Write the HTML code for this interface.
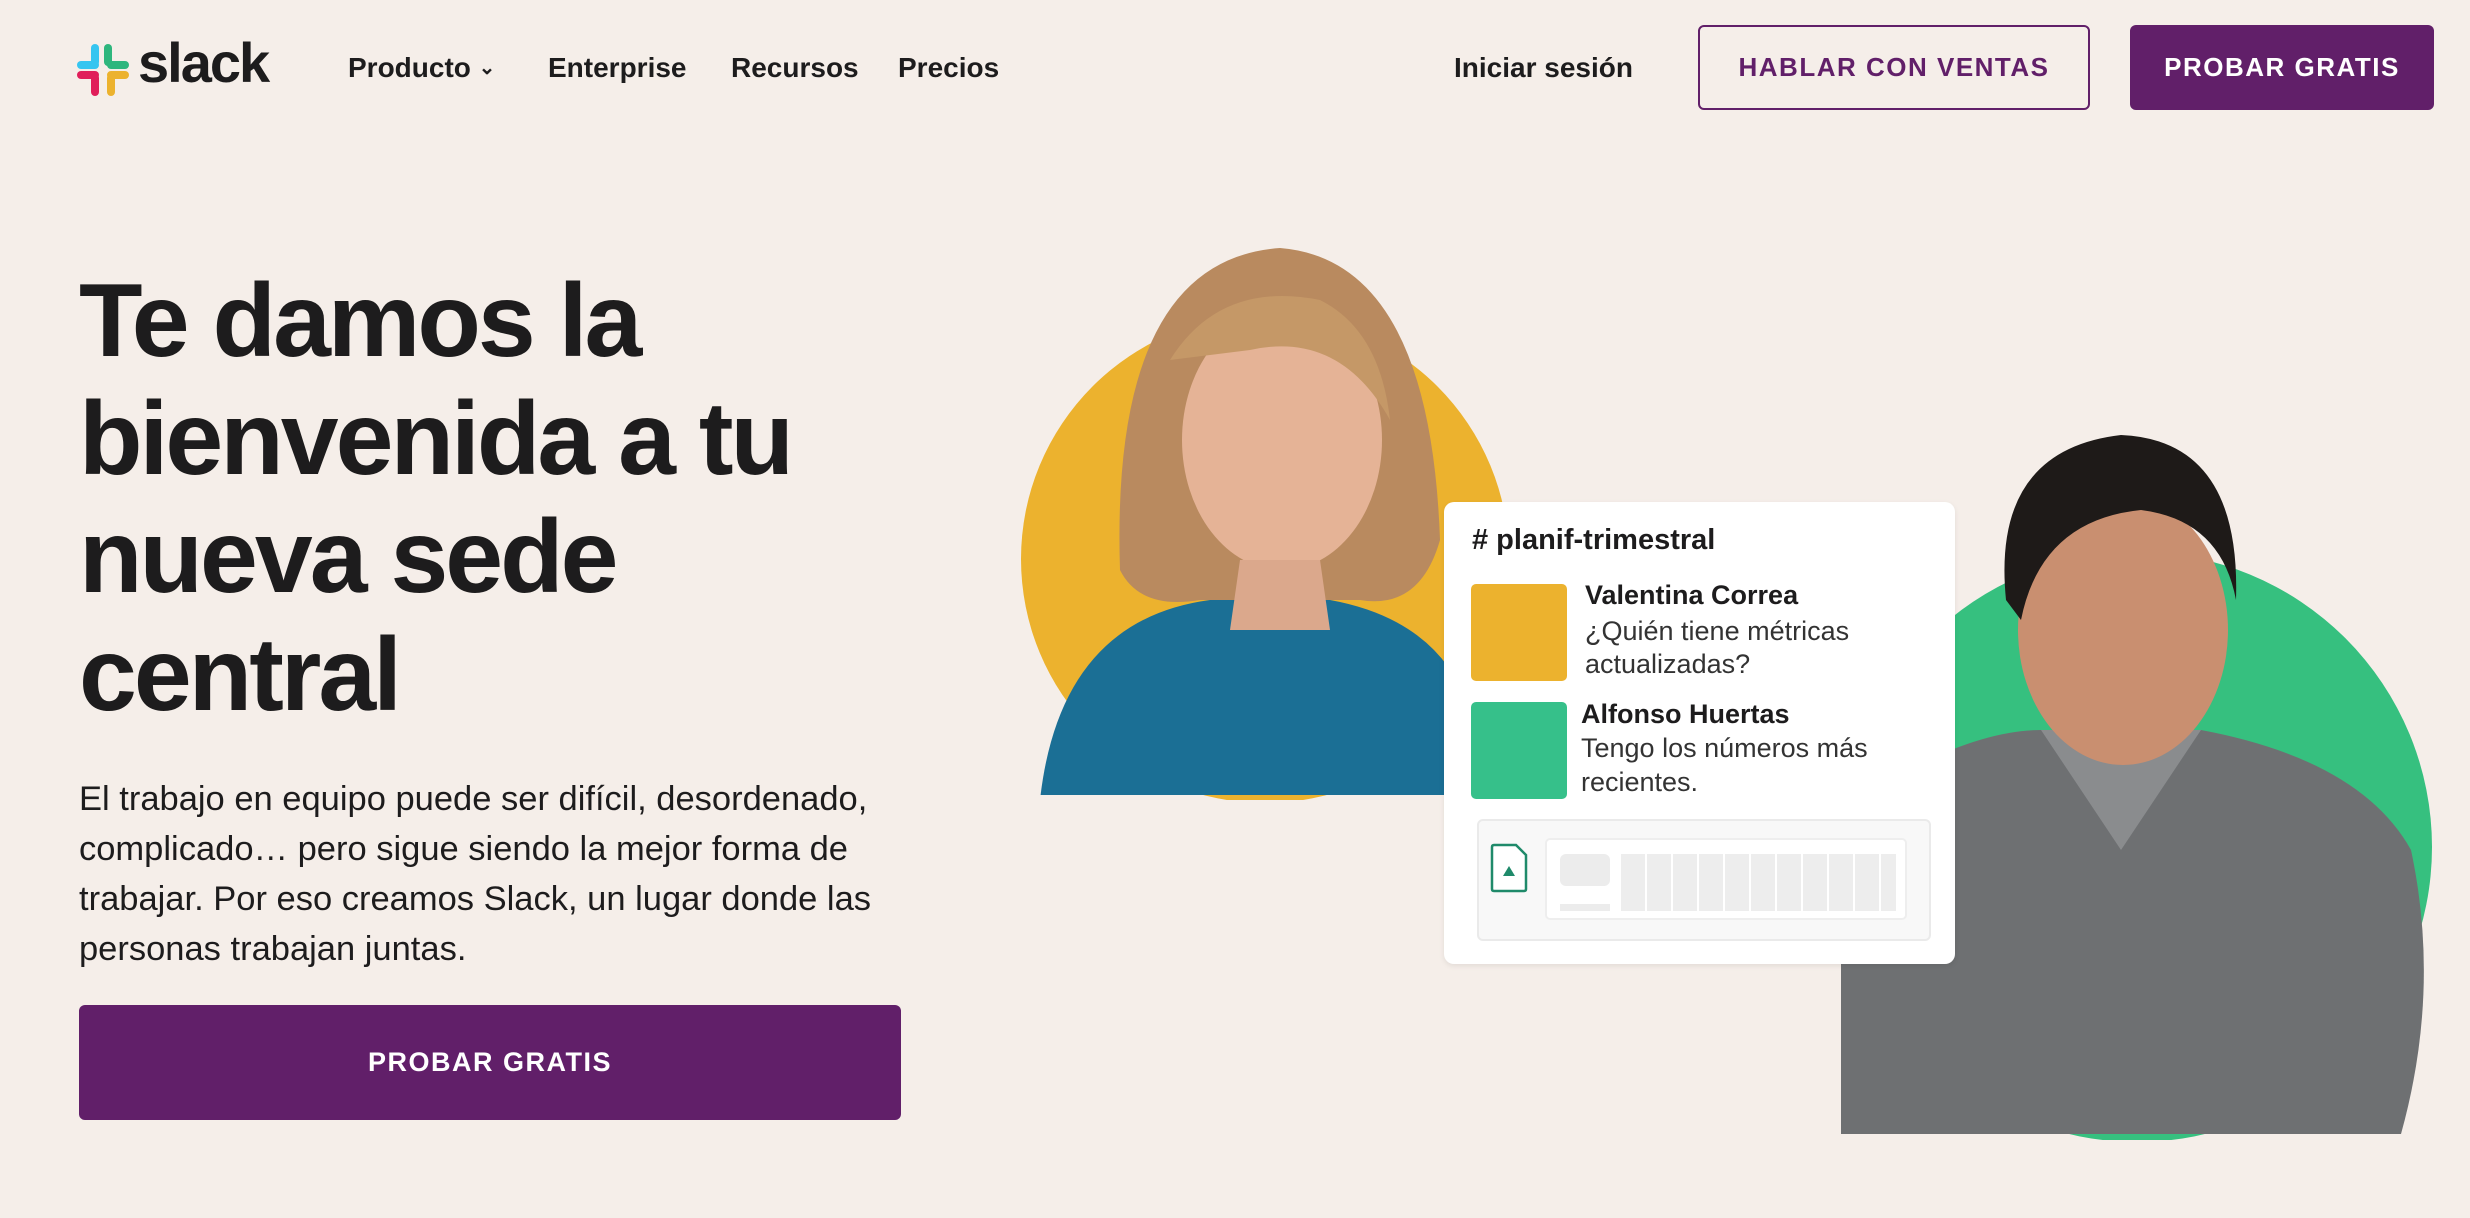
<!DOCTYPE html>
<html><head><meta charset="utf-8"><style>
*{margin:0;padding:0;box-sizing:border-box}
body{width:2470px;height:1218px;background:#f5eee9;font-family:"Liberation Sans",sans-serif;color:#1d1c1d;position:relative;overflow:hidden}
.a{position:absolute}
.nav{font-size:28px;font-weight:bold;top:52px;white-space:nowrap}
.btn{position:absolute;border-radius:6px;font-weight:bold;font-size:26px;letter-spacing:1.5px;display:flex;align-items:center;justify-content:center}
h1{position:absolute;left:79px;top:262px;font-size:104px;line-height:118px;letter-spacing:-3px;font-weight:bold;color:#1d1c1d}
p.lead{position:absolute;left:79px;top:774px;font-size:34.5px;line-height:50px;width:830px;color:#1d1c1d}
.card{position:absolute;left:1444px;top:502px;width:511px;height:462px;background:#fff;border-radius:10px;box-shadow:0 2px 6px rgba(0,0,0,.08)}
.card .t{position:absolute;font-family:"Liberation Sans",sans-serif}
</style></head><body>
<svg class="a" style="left:77px;top:44px" width="52" height="52" viewBox="0 0 52 52">
<rect x="0" y="17" width="22" height="8" rx="4" fill="#36c5f0"/><rect x="14" y="0" width="8" height="22" rx="4" fill="#36c5f0"/>
<rect x="27" y="0" width="8" height="22" rx="4" fill="#2eb67d"/><rect x="30" y="17" width="22" height="8" rx="4" fill="#2eb67d"/>
<rect x="30" y="27" width="22" height="8" rx="4" fill="#ecb22e"/><rect x="30" y="30" width="8" height="22" rx="4" fill="#ecb22e"/>
<rect x="14" y="30" width="8" height="22" rx="4" fill="#e01e5a"/><rect x="0" y="27" width="22" height="8" rx="4" fill="#e01e5a"/>
</svg>
<div class="a" style="left:138px;top:30px;font-size:56px;font-weight:bold;letter-spacing:-2px">slack</div>
<div class="a nav" style="left:348px">Producto <span style="font-size:20px;position:relative;top:-3px">&#8964;</span></div>
<div class="a nav" style="left:548px">Enterprise</div>
<div class="a nav" style="left:731px">Recursos</div>
<div class="a nav" style="left:898px">Precios</div>
<div class="a nav" style="left:1454px">Iniciar sesión</div>
<div class="btn" style="left:1698px;top:25px;width:392px;height:85px;border:2px solid #611f69;color:#611f69">HABLAR CON VENTAS</div>
<div class="btn" style="left:2130px;top:25px;width:304px;height:85px;background:#611f69;color:#fff">PROBAR GRATIS</div>

<h1>Te damos la<br>bienvenida a tu<br>nueva sede<br>central</h1>
<p class="lead">El trabajo en equipo puede ser difícil, desordenado, complicado… pero sigue siendo la mejor forma de trabajar. Por eso creamos Slack, un lugar donde las personas trabajan juntas.</p>
<div class="btn" style="left:79px;top:1005px;width:822px;height:115px;background:#611f69;color:#fff;font-size:27px">PROBAR GRATIS</div>

<svg class="a" style="left:1000px;top:240px" width="560" height="560" viewBox="0 0 560 560">
<defs><clipPath id="cw"><path d="M0 0H560V555H0Z"/></clipPath></defs>
<circle cx="265" cy="319" r="244" fill="#ecb22e"/>
<g clip-path="url(#cw)">
<path d="M40 560 Q60 380 210 360 L330 360 Q440 380 470 470 L470 560Z" fill="#1b6f95"/>
<path d="M120 330 Q110 20 280 8 Q430 20 440 300 Q420 370 360 360 L200 360 Q140 370 120 330Z" fill="#b98a5f"/>
<ellipse cx="282" cy="200" rx="100" ry="130" fill="#e5b396"/>
<path d="M240 320 L320 320 L330 390 L230 390Z" fill="#dba88c"/>
<path d="M170 120 Q220 40 320 60 Q380 90 390 180 Q340 90 250 110Z" fill="#c59867"/>
</g>
</svg>
<svg class="a" style="left:1841px;top:430px" width="600" height="710" viewBox="0 0 600 710">
<defs><clipPath id="cm"><path d="M0 0H600V704H0Z"/></clipPath></defs>
<circle cx="296" cy="417" r="295" fill="#36c07f"/>
<g clip-path="url(#cm)">
<path d="M0 704 L0 380 Q120 300 200 300 L360 300 Q520 330 570 420 Q600 560 560 704Z" fill="#6e7072"/>
<path d="M200 300 L280 420 L360 300Z" fill="#8a8c8e"/>
<ellipse cx="282" cy="200" rx="105" ry="135" fill="#c98f70"/>
<path d="M165 170 Q150 20 280 5 Q400 10 395 170 Q380 90 300 80 Q200 90 180 190Z" fill="#1e1a18"/>
</g>
</svg>

<div class="card">
<div class="t" style="left:28px;top:22px;font-size:29px;font-weight:bold">#&nbsp;planif-trimestral</div>
<div class="a" style="left:27px;top:82px;width:96px;height:97px;background:#ecb22e;border-radius:5px"></div>
<div class="t" style="left:141px;top:78px;font-size:27px;font-weight:bold">Valentina Correa</div>
<div class="t" style="left:141px;top:113px;font-size:27px;line-height:33px;color:#333">¿Quién tiene métricas<br>actualizadas?</div>
<div class="a" style="left:27px;top:200px;width:96px;height:97px;background:#36c08a;border-radius:5px"></div>
<div class="t" style="left:137px;top:197px;font-size:27px;font-weight:bold">Alfonso Huertas</div>
<div class="t" style="left:137px;top:229px;font-size:27px;line-height:34px;color:#333">Tengo los números más<br>recientes.</div>
<div class="a" style="left:33px;top:317px;width:454px;height:122px;background:#f8f8f8;border:2px solid #eaeaea;border-radius:6px"></div>
<svg class="a" style="left:46px;top:341px" width="38" height="50" viewBox="0 0 38 50"><path d="M4 2H26L36 12V46Q36 48 34 48H4Q2 48 2 46V4Q2 2 4 2Z" fill="#fff" stroke="#1f8a6a" stroke-width="2.5"/><path d="M13 33L19 23L25 33Z" fill="#1f8a6a"/></svg>
<div class="a" style="left:101px;top:336px;width:362px;height:82px;background:#fff;border:2px solid #eee;border-radius:5px"></div>
<div class="a" style="left:116px;top:352px;width:50px;height:32px;background:#ececec;border-radius:6px"></div>
<div class="a" style="left:116px;top:402px;width:50px;height:7px;background:#ececec"></div>
<div class="a" style="left:177px;top:352px;width:275px;height:57px;background:repeating-linear-gradient(90deg,#ededed 0 24px,#fff 24px 26px)"></div>
</div>
</body></html>
